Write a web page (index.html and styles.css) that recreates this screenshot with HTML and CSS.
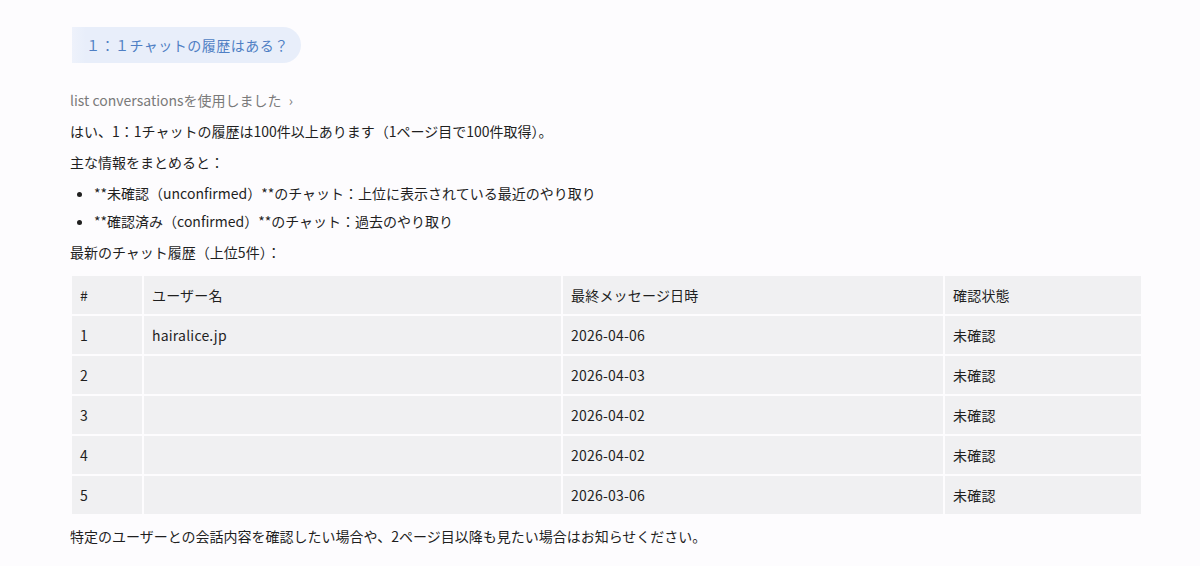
FILE: index.html
```html
<!DOCTYPE html>
<html lang="ja">
<head>
<meta charset="utf-8">
<title>チャット履歴</title>
<link rel="stylesheet" href="styles.css">
</head>
<body>
<main class="thread">
  <div class="user-msg">１：１チャットの履歴はある？</div>

  <div class="tool-use">list conversationsを使用しました <span class="chev">›</span></div>

  <div class="answer">
    <p>はい、1：1チャットの履歴は100件以上あります（1ページ目で100件取得）。</p>
    <p>主な情報をまとめると：</p>
    <ul>
      <li>**未確認（unconfirmed）**のチャット：上位に表示されている最近のやり取り</li>
      <li>**確認済み（confirmed）**のチャット：過去のやり取り</li>
    </ul>
    <p>最新のチャット履歴（上位5件）：</p>

    <table class="history">
      <thead>
        <tr><th class="c-num">#</th><th class="c-user">ユーザー名</th><th class="c-date">最終メッセージ日時</th><th class="c-state">確認状態</th></tr>
      </thead>
      <tbody>
        <tr><td>1</td><td>hairalice.jp</td><td>2026-04-06</td><td>未確認</td></tr>
        <tr><td>2</td><td></td><td>2026-04-03</td><td>未確認</td></tr>
        <tr><td>3</td><td></td><td>2026-04-02</td><td>未確認</td></tr>
        <tr><td>4</td><td></td><td>2026-04-02</td><td>未確認</td></tr>
        <tr><td>5</td><td></td><td>2026-03-06</td><td>未確認</td></tr>
      </tbody>
    </table>

    <p class="closing">特定のユーザーとの会話内容を確認したい場合や、2ページ目以降も見たい場合はお知らせください。</p>
  </div>
</main>
</body>
</html>
```

FILE: styles.css
```css
html, body {
  margin: 0;
  padding: 0;
  background: #fdfcfe;
}

body {
  font-family: "Noto Sans CJK JP", "Noto Sans", sans-serif;
  font-size: 14px;
  color: #1f1f1f;
}

.thread {
  padding: 27px 0 0 72px;
  width: 1072px;
}

.user-msg {
  display: inline-block;
  background: linear-gradient(90deg, #eef2fb 0%, #e8eefa 6%, #e8eefa 100%);
  color: #4f7fc4;
  font-size: 14px;
  letter-spacing: 0.5px;
  line-height: 36px;
  padding: 0 12px 0 14px;
  border-radius: 0 18px 18px 0;
}

.tool-use {
  margin-top: 27px;
  margin-left: -2px;
  color: #7a7a7a;
  line-height: 20px;
}

.tool-use .chev {
  margin-left: 4px;
}

.answer p {
  margin: 0 0 0 -2px;
  line-height: 20px;
}

.answer > p:first-child {
  margin-top: 11px;
}

.answer > p + p {
  margin-top: 11px;
}

.answer ul {
  margin: 11px 0 0;
  padding-left: 22px;
}

.answer li {
  line-height: 20px;
}

.answer li + li {
  margin-top: 8px;
}

.answer ul + p {
  margin-top: 11px;
}

.history {
  margin-top: 12px;
  width: 1073px;
  border-collapse: separate;
  border-spacing: 2px;
  margin-left: -2px;
  margin-bottom: 0;
}

.history th,
.history td {
  background: #f0f0f2;
  height: 38px;
  padding: 0 8px;
  text-align: left;
  font-weight: 400;
  vertical-align: middle;
  letter-spacing: 0.2px;
}

.c-num { width: 54px; }
.c-user { width: 401px; }
.c-date { width: 364px; }

.closing {
  margin-top: 10px !important;
}
```
